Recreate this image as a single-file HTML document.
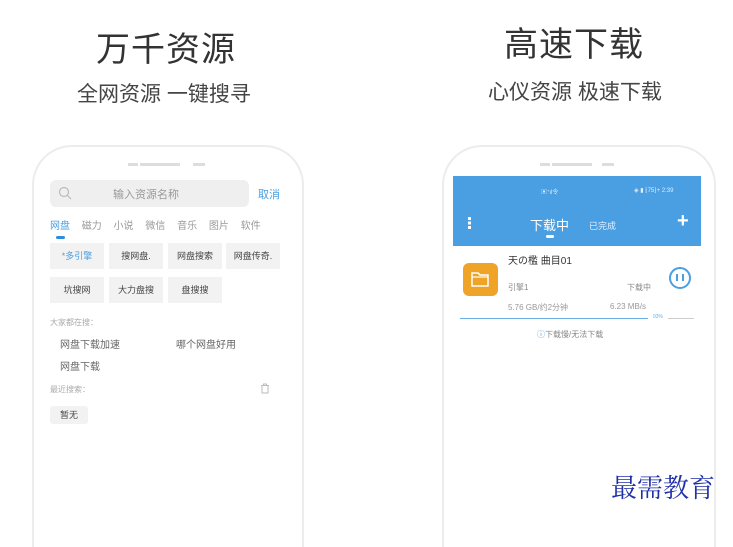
<!DOCTYPE html><html><head><meta charset="utf-8"><style>
body{margin:0;width:733px;height:516px;background:#fff;position:relative;overflow:hidden;font-family:"Liberation Sans","Noto Sans CJK SC",sans-serif;}
.a{position:absolute;white-space:nowrap}
.phone{position:absolute;border:2px solid #ececec;border-bottom:none;border-radius:40px 40px 0 0;height:400px}
.chip{position:absolute;background:#f2f2f2;font-size:9px;color:#444;text-align:center;line-height:26px;height:26px}
</style></head><body>
<div class="a" style="left:96px;top:22px;font-size:34px;color:#333;letter-spacing:1px">万千资源</div>
<div class="a" style="left:77px;top:78px;font-size:21px;color:#444">全网资源 一键搜寻</div>
<div class="a" style="left:504px;top:17px;font-size:34px;color:#333;letter-spacing:1px">高速下载</div>
<div class="a" style="left:488px;top:76px;font-size:21px;color:#444">心仪资源 极速下载</div>

<div class="phone" style="left:32px;top:145px;width:268px"></div>
<div class="a" style="left:128px;top:163px;width:10px;height:3px;background:#ddd"></div>
<div class="a" style="left:140px;top:163px;width:40px;height:3px;background:#ddd"></div>
<div class="a" style="left:193px;top:163px;width:12px;height:3px;background:#ddd"></div>
<div class="a" style="left:50px;top:180px;width:199px;height:27px;background:#efefef;border-radius:6px"></div>
<svg class="a" style="left:58px;top:186px" width="14" height="14"><circle cx="6" cy="6" r="4.5" fill="none" stroke="#bbb" stroke-width="1.2"/><line x1="9.5" y1="9.5" x2="13" y2="13" stroke="#bbb" stroke-width="1.2"/></svg>
<div class="a" style="left:113px;top:186px;font-size:11px;color:#999">输入资源名称</div>
<div class="a" style="left:258px;top:186px;font-size:11px;color:#4a9fe0">取消</div>
<div class="a" style="left:50px;top:217px;font-size:10px;color:#999;word-spacing:9px"><span style="color:#4a9fe0">网盘</span> 磁力 小说 微信 音乐 图片 软件</div>
<div class="a" style="left:56px;top:236px;width:9px;height:3px;border-radius:2px;background:#2a8fe0"></div>
<div class="chip" style="left:50px;top:243px;width:54px;color:#4a9fe0">*多引擎</div>
<div class="chip" style="left:109px;top:243px;width:54px">搜网盘.</div>
<div class="chip" style="left:168px;top:243px;width:54px">网盘搜索</div>
<div class="chip" style="left:226px;top:243px;width:54px">网盘传奇.</div>
<div class="chip" style="left:50px;top:277px;width:54px">坑搜网</div>
<div class="chip" style="left:109px;top:277px;width:54px">大力盘搜</div>
<div class="chip" style="left:168px;top:277px;width:54px">盘搜搜</div>
<div class="a" style="left:50px;top:317px;font-size:8px;color:#aaa">大家都在搜：</div>
<div class="a" style="left:60px;top:336px;font-size:10px;color:#666">网盘下载加速</div>
<div class="a" style="left:176px;top:336px;font-size:10px;color:#666">哪个网盘好用</div>
<div class="a" style="left:60px;top:358px;font-size:10px;color:#666">网盘下载</div>
<div class="a" style="left:50px;top:384px;font-size:8px;color:#aaa">最近搜索：</div>
<svg class="a" style="left:260px;top:383px" width="10" height="11"><path d="M1 2.5h8M3.5 2.5V1h3v1.5M2 3v7h6V3" fill="none" stroke="#bbb"/></svg>
<div class="chip" style="left:50px;top:406px;width:38px;height:18px;line-height:18px;border-radius:3px">暂无</div>

<div class="phone" style="left:442px;top:145px;width:270px"></div>
<div class="a" style="left:540px;top:163px;width:10px;height:3px;background:#ddd"></div>
<div class="a" style="left:552px;top:163px;width:40px;height:3px;background:#ddd"></div>
<div class="a" style="left:602px;top:163px;width:12px;height:3px;background:#ddd"></div>
<div class="a" style="left:453px;top:176px;width:248px;height:70px;background:#4a9fe2"></div>
<div class="a" style="left:541px;top:187px;font-size:6px;color:#dceeff">▣ᐩıl令</div>
<div class="a" style="left:634px;top:187px;font-size:6px;color:#dceeff">◈ ▮ ⁅75⁆+ 2:39</div>
<div class="a" style="left:468px;top:217px;width:3px;height:12px;background:repeating-linear-gradient(#fff 0 3px,transparent 3px 4.5px)"></div>
<div class="a" style="left:530px;top:215px;font-size:13px;color:#fff">下载中</div>
<div class="a" style="left:546px;top:235px;width:8px;height:3px;border-radius:2px;background:#fff"></div>
<div class="a" style="left:589px;top:219px;font-size:9px;color:#e3f1ff">已完成</div>
<div class="a" style="left:677px;top:210px;font-size:20px;color:#fff;font-weight:bold">+</div>
<div class="a" style="left:508px;top:252px;font-size:10px;color:#333">天の檻 曲目01</div>
<div class="a" style="left:463px;top:263px;width:35px;height:33px;border-radius:6px;background:#efa428"></div>
<svg class="a" style="left:470px;top:270px" width="20" height="18"><path d="M2 3h6l2 2h8v11H2z" fill="none" stroke="#fff" stroke-width="1.5"/><line x1="2" y1="7" x2="18" y2="7" stroke="#fff" stroke-width="1.2"/></svg>
<div class="a" style="left:508px;top:282px;font-size:8px;color:#888">引擎1</div>
<div class="a" style="left:627px;top:282px;font-size:8px;color:#888">下载中</div>
<div class="a" style="left:669px;top:267px;width:22px;height:22px;border:2px solid #4a9fe2;border-radius:50%;box-sizing:border-box"></div>
<div class="a" style="left:676px;top:274px;width:2px;height:7px;background:#4a9fe2"></div>
<div class="a" style="left:682px;top:274px;width:2px;height:7px;background:#4a9fe2"></div>
<div class="a" style="left:508px;top:302px;font-size:8px;color:#999">5.76 GB/约2分钟</div>
<div class="a" style="left:610px;top:302px;font-size:8px;color:#999">6.23 MB/s</div>
<div class="a" style="left:460px;top:318px;width:188px;height:1px;background:#6aaee8"></div>
<div class="a" style="left:653px;top:314px;font-size:5px;color:#6aaee8">93%</div>
<div class="a" style="left:668px;top:318px;width:26px;height:1px;background:#ccc"></div>
<div class="a" style="left:537px;top:329px;font-size:8px;color:#888"><span style="color:#4a9fe2">ⓘ</span>下载慢/无法下载</div>

<div class="a" style="left:611px;top:468px;font-size:26px;color:#1e2fa8;font-family:'Liberation Serif','Noto Serif CJK SC',serif">最需教育</div>
</body></html>
